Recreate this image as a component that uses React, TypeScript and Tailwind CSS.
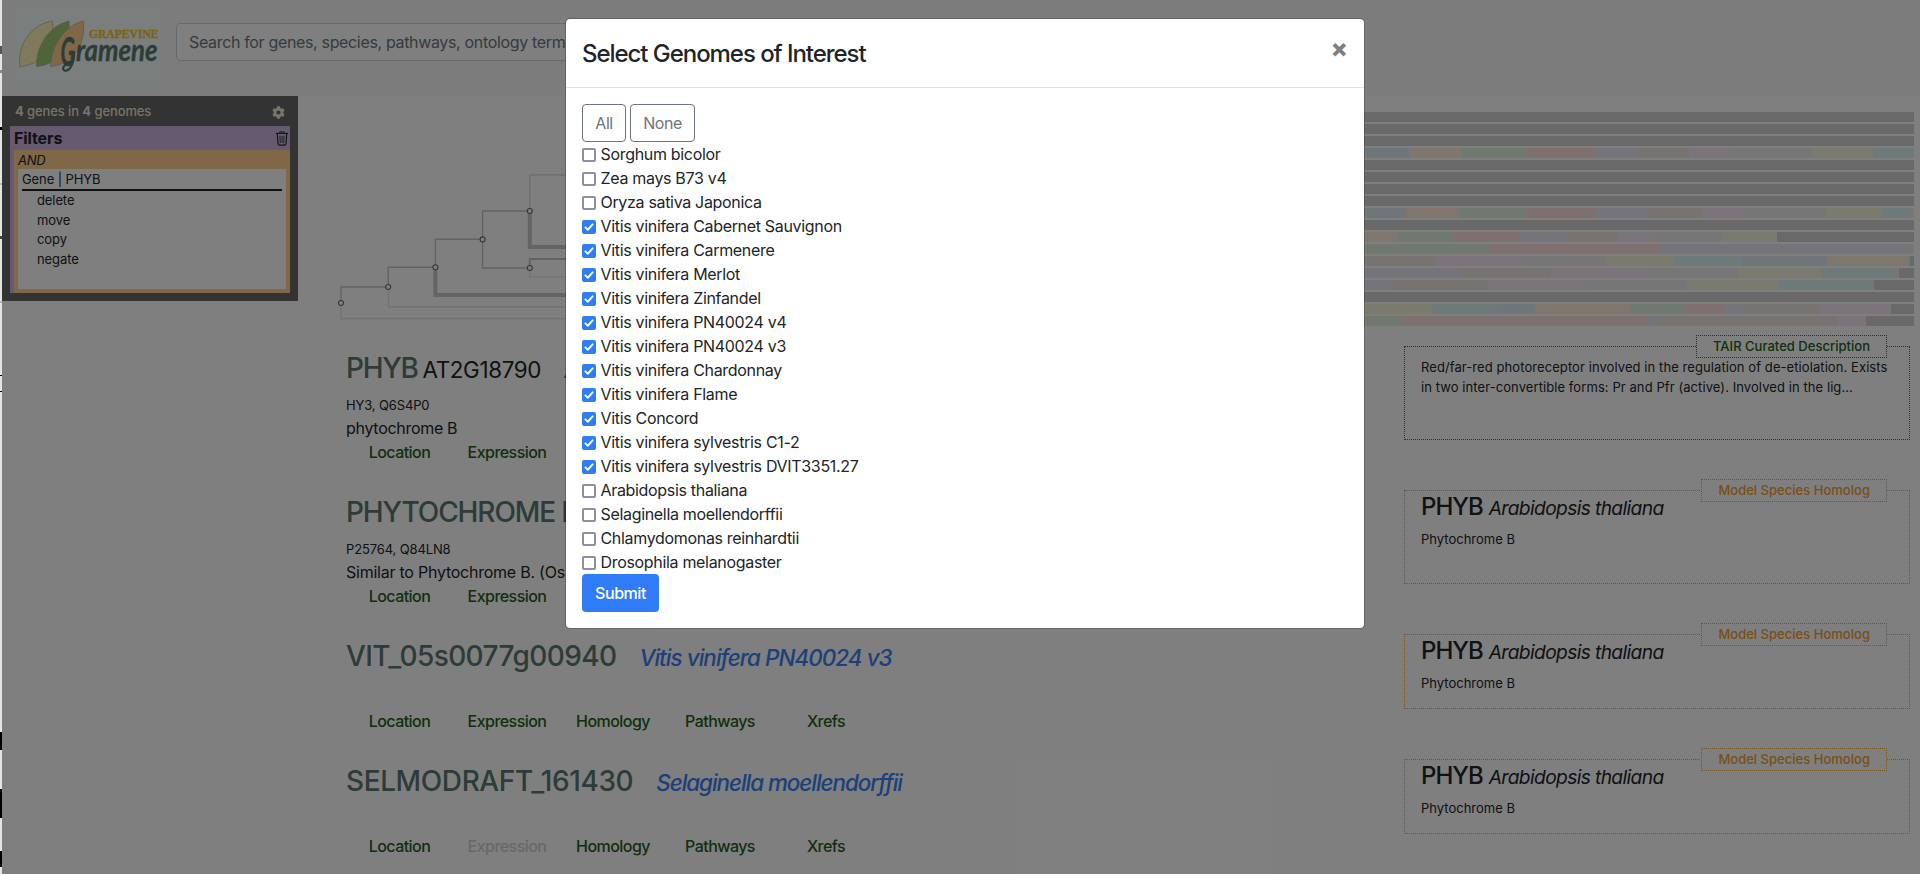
import React from "react";
import { FaCog } from "react-icons/fa";

const PAL: Record<string, string> = {
  blue: "#dfecf5",
  orange: "#feecdc",
  green: "#dff2df",
  red: "#fae1df",
  purple: "#ece9f7",
  brown: "#eee6e1",
  pink: "#f6e9f4",
  grey: "#ececec",
  olive: "#f5f5dd",
  teal: "#ddf2f5",
  none: "#d2d2d2",
};

type Seg = [string, number];

const X0 = 1364;
const END = 1914;
const BLANK: Seg[] = [["none", END]];

const BARS: Seg[][] = [
  BLANK,
  BLANK,
  BLANK,
  [["blue", 1409], ["orange", 1462], ["green", 1526], ["red", 1596], ["purple", 1639], ["brown", 1689], ["pink", 1731], ["grey", 1812], ["olive", 1873], ["teal", END]],
  BLANK,
  BLANK,
  BLANK,
  BLANK,
  [["blue", 1406], ["orange", 1460], ["green", 1525], ["red", 1596], ["purple", 1648], ["brown", 1701], ["pink", 1745], ["grey", 1826], ["olive", 1882], ["teal", 1911], ["orange", END]],
  BLANK,
  [["orange", 1398], ["green", 1453], ["red", 1522], ["purple", 1568], ["brown", 1618], ["pink", 1656], ["grey", 1723], ["olive", 1777], ["none", END]],
  [["green", 1489], ["red", 1660], ["purple", 1908], ["brown", 1912], ["pink", END]],
  [["brown", 1436], ["pink", 1523], ["grey", 1606], ["olive", 1674], ["teal", 1742], ["blue", 1827], ["orange", 1908], ["green", 1910], ["none", END]],
  [["purple", 1461], ["brown", 1551], ["pink", 1645], ["grey", 1738], ["olive", 1821], ["teal", 1898], ["orange", 1899], ["none", END]],
  [["purple", 1393], ["brown", 1488], ["pink", 1589], ["grey", 1687], ["olive", 1779], ["teal", 1874], ["none", END]],
  BLANK,
  [["olive", 1432], ["teal", 1497], ["blue", 1535], ["orange", 1631], ["green", 1683], ["red", 1724], ["purple", 1743], ["brown", 1820], ["pink", 1891], ["none", END]],
  [["green", 1401], ["red", 1647], ["purple", 1657], ["brown", 1838], ["pink", 1866], ["none", END]],
];

const GENOMES: [string, boolean][] = [
  ["Sorghum bicolor", false],
  ["Zea mays B73 v4", false],
  ["Oryza sativa Japonica", false],
  ["Vitis vinifera Cabernet Sauvignon", true],
  ["Vitis vinifera Carmenere", true],
  ["Vitis vinifera Merlot", true],
  ["Vitis vinifera Zinfandel", true],
  ["Vitis vinifera PN40024 v4", true],
  ["Vitis vinifera PN40024 v3", true],
  ["Vitis vinifera Chardonnay", true],
  ["Vitis vinifera Flame", true],
  ["Vitis Concord", true],
  ["Vitis vinifera sylvestris C1-2", true],
  ["Vitis vinifera sylvestris DVIT3351.27", true],
  ["Arabidopsis thaliana", false],
  ["Selaginella moellendorffii", false],
  ["Chlamydomonas reinhardtii", false],
  ["Drosophila melanogaster", false],
];

function Logo() {
  return (
    <svg className="block h-[82px] w-[145px] bg-[#f4fdfa]" viewBox="16 3 145 82">
      <g stroke="#a8a890" strokeWidth="0.6">
        <path d="M52.5 21C32 24 17 44 19.8 66.7C38 65 56 52 52.5 21Z" fill="#fef4b8" />
        <path d="M69 21C51 25 36 44 36.5 66.5C54 65 72 52 69 21Z" fill="#a0c874" />
        <path d="M83.5 21C66 25 51 44 50.5 66.5C67 65 86 52 83.5 21Z" fill="#fece8e" />
      </g>
      <text x="89" y="38" fontFamily="'Liberation Serif', serif" fontWeight="700" fontSize="12.5" textLength="69.5" lengthAdjust="spacingAndGlyphs" fill="#fbc42c" stroke="#fbc42c" strokeWidth="0.4">
        GRAPEVINE
      </text>
      <g fontFamily="Lato, sans-serif" fontStyle="italic" fontWeight="700" fill="#5a7872" stroke="#5a7872" strokeWidth="0.3">
        <text transform="translate(60.5 65.5) scale(0.68 1.28)" fontSize="31">
          G
        </text>
        <text transform="translate(76 60.5) scale(0.8 1.18)" fontSize="26" textLength="102" lengthAdjust="spacingAndGlyphs">
          ramene
        </text>
      </g>
      <path d="M74 52C75 61 70 72 64.5 70.5C61 69 64 63.5 73 60.5" fill="none" stroke="#5a7872" strokeWidth="2.2" strokeLinecap="round" />
    </svg>
  );
}

function TrashIcon() {
  return (
    <svg className="block h-[15px] w-[14px]" viewBox="0 0 14 15" fill="none" stroke="#20242b">
      <path d="M0.8 2.4H13.2" strokeWidth="1.1" />
      <path d="M4.8 2V0.9H9.2V2" strokeWidth="0.9" />
      <path d="M2.3 2.6L3 12.6Q3.1 14.1 4.5 14.1H9.5Q10.9 14.1 11 12.6L11.7 2.6" strokeWidth="1.1" />
      <path d="M5 4.8L5.2 12M7 4.8V12M9 4.8L8.8 12" strokeWidth="0.8" />
    </svg>
  );
}

function Tree() {
  return (
    <svg className="block h-[190px] w-[246px]" viewBox="320 140 246 190" fill="none">
      <g stroke="#ededed" strokeWidth="1.4">
        <path d="M529.8 211V175H566" stroke="#dedede" />
        <path d="M529.8 268V276.7H566" />
        <path d="M388.5 287V306.7H566" stroke="#e6e6e6" />
        <path d="M341 303V318.7H566" stroke="#e6e6e6" />
      </g>
      <g stroke="#c6c6c6" strokeWidth="1.4">
        <path d="M341 303V287H388.2V267.3H435.4V239.3H482.6V211H529.8" />
        <path d="M482.6 239.3V268H529.8" />
      </g>
      <path d="M529.8 268V259H566" stroke="#c6c6c6" strokeWidth="2" />
      <path d="M435.4 269V295H566" stroke="#c9c9c9" strokeWidth="4" />
      <path d="M529.8 213V247H566" stroke="#c9c9c9" strokeWidth="4" />
      <g stroke="#5a7872" strokeWidth="1.1" fill="#fff">
        <circle cx="341" cy="303" r="2.5" />
        <circle cx="388.2" cy="287" r="2.5" />
        <circle cx="435.4" cy="267.2" r="2.5" />
        <circle cx="482.6" cy="239.4" r="2.5" />
        <circle cx="529.8" cy="211" r="2.5" />
        <circle cx="529.8" cy="268" r="2.5" />
      </g>
    </svg>
  );
}

function Bars() {
  return (
    <div className="flex w-[550px] flex-col gap-[2px]">
      {BARS.map((segs, i) => (
        <div key={i} className="flex h-[10px]">
          {segs.map(([c, end], j) => (
            <div key={j} style={{ width: end - (j ? segs[j - 1][1] : X0), background: PAL[c] }} />
          ))}
        </div>
      ))}
    </div>
  );
}

const TABS = ["Location", "Expression", "Homology", "Pathways", "Xrefs"];

function Tabs({ disabled }: { disabled?: string }) {
  return (
    <div className="grid w-[533px] grid-cols-[107px_108px_104px_110px_102px] text-center text-[16px] font-medium leading-6 tracking-[-0.55px]">
      {TABS.map((t) => (
        <span key={t} className={t === disabled ? "text-[#d0d0d0]" : "text-[#235f16]"}>
          {t}
        </span>
      ))}
    </div>
  );
}

function Homolog() {
  return (
    <>
      <div className="flex items-baseline gap-[6px] leading-8 text-[#212529]">
        <span className="text-[24px] font-[550] tracking-[-1px]">PHYB</span>
        <span className="text-[19.2px] italic tracking-[-0.62px]">Arabidopsis thaliana</span>
      </div>
      <div className="pt-[3px] text-[13px] leading-6 text-[#212529]">Phytochrome B</div>
    </>
  );
}

function Card({ label, color, h, children }: { label: string; color: "green" | "orange"; h: string; children: React.ReactNode }) {
  const border = color === "green" ? "border-[#3f7a34]" : "border-[#f0a848]";
  const text = color === "green" ? "text-[#235f16]" : "text-[#f0a030]";
  return (
    <div className="w-[506px] shrink-0 pt-[11px]">
      <div className={`relative border border-dotted px-4 ${h} ${border}`}>
        <div className={`absolute -top-3 right-[22px] h-[23px] border border-dotted bg-white px-4 text-[13px] font-medium leading-[21px] tracking-[0.02px] ${border} ${text}`}>
          {label}
        </div>
        {children}
      </div>
    </div>
  );
}

function Title({ children }: { children: React.ReactNode }) {
  return <div className="mb-2 flex h-[34px] items-baseline whitespace-nowrap leading-[34px]">{children}</div>;
}

const NAME = "text-[28px] font-[550] text-[#5a7872]";
const SPECIES = "text-[22.4px] font-medium italic text-[#3680f5]";

function Modal() {
  return (
    <div className="absolute left-[565px] top-[18px] w-[800px] rounded-[5px] border border-black/20 bg-white bg-clip-padding text-[#212529]">
      <div className="flex h-[69px] items-start justify-between border-b border-[#dee2e6] pl-4 pr-4 pt-[17px]">
        <h4 className="text-[24px] font-[550] leading-9 tracking-[-1.05px]">Select Genomes of Interest</h4>
        <button className="flex h-[25px] items-center text-[25px] font-extrabold leading-none text-[#7f7f7f]">×</button>
      </div>
      <div className="px-4 pb-4 pt-4">
        <div className="flex gap-1 text-[16px] leading-6 tracking-[-0.5px] text-[#6c757d]">
          <button className="h-[38px] w-[44px] rounded border border-[#6c757d]">All</button>
          <button className="h-[38px] w-[65px] rounded border border-[#6c757d]">None</button>
        </div>
        {GENOMES.map(([name, on]) => (
          <label key={name} className="flex h-6 items-center gap-[4.5px] text-[16px] leading-6 tracking-[-0.32px]">
            {on ? (
              <span className="mt-[2px] flex h-[14px] w-[14px] items-center justify-center rounded-[2px] bg-[#2f7cf6]">
                <svg className="h-[14px] w-[14px]" viewBox="0 0 14 14" fill="none" stroke="#fff" strokeWidth="2" strokeLinecap="round" strokeLinejoin="round">
                  <path d="M3.4 7.4L5.8 9.8L10.6 4.4" />
                </svg>
              </span>
            ) : (
              <span className="mt-[2px] h-[14px] w-[14px] rounded-[2px] border-2 border-[#8f8f9d] bg-white" />
            )}
            <span>{name}</span>
          </label>
        ))}
        <button className="block h-[38px] w-[77px] rounded bg-[#2f7cf6] text-[16px] font-medium leading-6 tracking-[-0.45px] text-white">Submit</button>
      </div>
    </div>
  );
}

export default function App() {
  return (
    <div className="relative flex h-[874px] w-full overflow-hidden bg-white font-['Inter','Liberation_Sans',sans-serif] text-[#212529]">
      <svg className="block h-full w-[2px] shrink-0 bg-[#e4e4e4]" viewBox="0 0 2 874">
        <path d="M0 46h2v8h-2z" fill="#50545c" />
        <path d="M0 70h2v3h-2z" fill="#888" />
        <path d="M0 127h2v3h-2zM0 375h2v1h-2zM0 391h2v1h-2zM0 732h2v18h-2zM0 789h2v29h-2zM0 851h2v16h-2z" fill="#000" />
        <path d="M0 183h2v2h-2zM0 301h2v2h-2z" fill="#b8b8b8" />
        <path d="M0 236h2v3h-2z" fill="#444" />
      </svg>

      <div className="relative flex min-w-0 flex-1 flex-col">
        <header className="flex h-[96px] shrink-0 items-start bg-[#f8f8f8] pl-[14px]">
          <div className="pt-[3px]">
            <Logo />
          </div>
          <div className="ml-[15px] mt-[23px] h-[38px] w-[700px] rounded border border-[#ced4da] bg-white px-3 text-[16px] leading-9 tracking-[-0.34px] text-[#6c757d]">
            Search for genes, species, pathways, ontology terms
          </div>
        </header>

        <div className="flex min-h-0 flex-1">
          <aside className="h-[205px] w-[296px] shrink-0 bg-[#666] px-2">
            <div className="flex h-[30px] items-center justify-between pl-[5px] pr-[5px] pt-[2px] text-[13px] font-medium tracking-[-0.1px] text-[#fff8dc]/90">
              <span>
                <b>4</b> genes in <b>4</b> genomes
              </span>
              <FaCog size={13} />
            </div>
            <div className="h-[167px] bg-[#cab5df] pl-1">
              <div className="flex h-6 items-center justify-between pr-[1px]">
                <span className="text-[16px] font-bold leading-6 tracking-[-0.1px]">Filters</span>
                <TrashIcon />
              </div>
              <div className="h-[143px] bg-[#fece8e] px-1 pb-1">
                <div className="h-[19px] text-[13px] italic leading-5 tracking-[-0.2px]">AND</div>
                <div className="h-[120px] bg-white px-1 text-[13px] tracking-[-0.1px]">
                  <div className="h-[22px] border-b-2 border-[#212529] leading-[21px]">Gene | PHYB</div>
                  <div className="pl-[15px] leading-[19.7px]">
                    <div>delete</div>
                    <div>move</div>
                    <div>copy</div>
                    <div>negate</div>
                  </div>
                </div>
              </div>
            </div>
          </aside>

          <main className="min-w-0 flex-1">
            <div className="flex h-[239px] justify-between pr-[6px] pt-4">
              <div className="pl-[22px] pt-[28px]">
                <Tree />
              </div>
              <Bars />
            </div>

            <section className="pl-[48px] pr-[10px]">
              <article className="flex h-[144px] justify-between">
                <div className="pt-4">
                  <Title>
                    <span className={`${NAME} tracking-[-1.3px]`}>PHYB</span>
                    <span className="ml-[5px] text-[22.4px] tracking-[-0.36px]">AT2G18790</span>
                    <span className={`${SPECIES} ml-[23px] tracking-[-0.8px]`}>Arabidopsis thaliana</span>
                  </Title>
                  <div className="h-[23px] text-[13px] leading-6 tracking-[-0.13px]">HY3, Q6S4P0</div>
                  <div className="text-[16px] leading-6 tracking-[-0.3px]">phytochrome B</div>
                  <Tabs />
                </div>
                <Card label="TAIR Curated Description" color="green" h="h-[94px]">
                  <p className="whitespace-nowrap pt-[10px] text-[13px] leading-5 tracking-[0.08px]">
                    Red/far-red photoreceptor involved in the regulation of de-etiolation. Exists
                    <br />
                    in two inter-convertible forms: Pr and Pfr (active). Involved in the lig...
                  </p>
                </Card>
              </article>

              <article className="flex h-[144px] justify-between">
                <div className="pt-4">
                  <Title>
                    <span className={`${NAME} tracking-[-1.1px]`}>PHYTOCHROME B</span>
                  </Title>
                  <div className="h-[23px] text-[13px] leading-6 tracking-[-0.13px]">P25764, Q84LN8</div>
                  <div className="text-[16px] leading-6 tracking-[-0.24px]">Similar to Phytochrome B. (Os</div>
                  <Tabs />
                </div>
                <Card label="Model Species Homolog" color="orange" h="h-[94px]">
                  <Homolog />
                </Card>
              </article>

              <article className="flex h-[125px] justify-between">
                <div className="pt-4">
                  <Title>
                    <span className={`${NAME} tracking-[-0.6px]`}>VIT_05s0077g00940</span>
                    <span className={`${SPECIES} ml-[23px] tracking-[-0.93px]`}>Vitis vinifera PN40024 v3</span>
                  </Title>
                  <div className="pt-7">
                    <Tabs />
                  </div>
                </div>
                <Card label="Model Species Homolog" color="orange" h="h-[75px]">
                  <Homolog />
                </Card>
              </article>

              <article className="flex h-[125px] justify-between">
                <div className="pt-4">
                  <Title>
                    <span className={`${NAME} tracking-[-0.4px]`}>SELMODRAFT_161430</span>
                    <span className={`${SPECIES} ml-[23px] tracking-[-1.03px]`}>Selaginella moellendorffii</span>
                  </Title>
                  <div className="pt-7">
                    <Tabs disabled="Expression" />
                  </div>
                </div>
                <Card label="Model Species Homolog" color="orange" h="h-[75px]">
                  <Homolog />
                </Card>
              </article>
            </section>
          </main>
        </div>
        <div className="absolute inset-0 bg-black/50" />
      </div>

      <Modal />
    </div>
  );
}
